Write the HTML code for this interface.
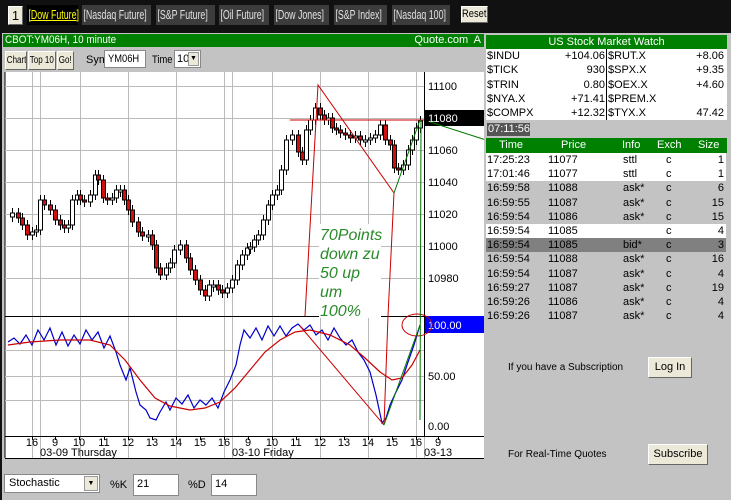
<!DOCTYPE html>
<html><head><meta charset="utf-8"><style>
*{margin:0;padding:0;box-sizing:border-box}
body{width:731px;height:500px;background:#111;font-family:"Liberation Sans",sans-serif;font-size:11px;position:relative;overflow:hidden}
.a{position:absolute}
.tab{position:absolute;top:5px;height:20px;background:#3c3c3c;color:#e0e0e0;font-size:13px;line-height:20px;white-space:nowrap}
.tab span{display:inline-block;transform:scaleX(.68);transform-origin:0 0;padding-left:2px}
.sx{display:inline-block;transform:scaleX(.78);transform-origin:0 0;padding-left:2px}
.btn{position:absolute;background:#ece9d8;border:1px solid #fff;border-right-color:#666;border-bottom-color:#666;color:#000;text-align:center;font-size:11px;white-space:nowrap;overflow:hidden}
.row{position:absolute;left:486px;width:240px;height:15px;font-size:11px;line-height:15px}
.row span{position:absolute}
</style></head><body>
<div class="btn" style="left:8px;top:6px;width:15px;height:19px;font-size:13px;line-height:17px">1</div>
<div class="tab" style="left:27px;width:51px;background:#000;color:#ff0"><span style="text-decoration:underline">[Dow Future]</span></div>
<div class="tab" style="left:82px;width:69px"><span>[Nasdaq Future]</span></div>
<div class="tab" style="left:156px;width:59px"><span>[S&amp;P Future]</span></div>
<div class="tab" style="left:219px;width:50px"><span>[Oil Future]</span></div>
<div class="tab" style="left:274px;width:55px"><span>[Dow Jones]</span></div>
<div class="tab" style="left:334px;width:53px"><span>[S&amp;P Index]</span></div>
<div class="tab" style="left:392px;width:58px"><span>[Nasdaq 100]</span></div>
<div class="btn" style="left:461px;top:6px;width:27px;height:17px;line-height:15px"><span class="sx" style="padding-left:0;transform:scaleX(.85)">Reset</span></div>

<div class="a" style="left:2px;top:33px;width:482px;height:467px;background:#c3c3c3"></div>
<div class="a" style="left:3px;top:34px;width:481px;height:13px;background:#008000;color:#fff;font-size:11px;line-height:13px;padding-left:2px"><span class="sx" style="padding-left:0;transform:scaleX(.9)">CBOT:YM06H, 10 minute</span><span style="position:absolute;right:3px">Quote.com&nbsp; A</span></div>
<div class="btn" style="left:5px;top:51px;width:22px;height:19px;line-height:17px;font-size:10px;text-align:left"><span class="sx" style="padding-left:1px;transform:scaleX(.8)">Chart</span></div>
<div class="btn" style="left:28px;top:51px;width:28px;height:19px;line-height:17px;font-size:10px;text-align:left"><span class="sx" style="padding-left:1px;transform:scaleX(.8)">Top 10</span></div>
<div class="btn" style="left:57px;top:51px;width:17px;height:19px;line-height:17px;font-size:10px;text-align:left"><span class="sx" style="padding-left:1px;transform:scaleX(.8)">Go!</span></div>
<div class="a" style="left:86px;top:54px;font-size:11px">Sym</div>
<div class="a" style="left:104px;top:50px;width:42px;height:18px;background:#fff;border:1px solid #888;padding:2px 3px;font-size:11px"><span class="sx" style="padding:0;transform:scaleX(.85)">YM06H</span></div>
<div class="a" style="left:152px;top:54px;font-size:11px"><span class="sx" style="padding:0;transform:scaleX(.85)">Time</span></div>
<div class="a" style="left:174px;top:50px;width:27px;height:18px;background:#fff;border:1px solid #888;padding:2px 2px;font-size:11px">10<span style="position:absolute;right:1px;top:1px;width:11px;height:14px;background:#ece9d8;border:1px solid #999;font-size:7px;text-align:center;line-height:12px">▼</span></div>

<svg class="a" style="left:0;top:70px" width="731" height="400" viewBox="0 70 731 400">
<rect x="5" y="72" width="479" height="386" fill="#fff"/>
<line x1="5" y1="72" x2="5" y2="458" stroke="#000"/>
<g id="grid" stroke="#bbb" stroke-width="1"></g>
<line x1="424.5" y1="72" x2="424.5" y2="436" stroke="#000"/>
<line x1="5" y1="316.5" x2="484" y2="316.5" stroke="#000"/>
<line x1="5" y1="436.5" x2="484" y2="436.5" stroke="#000"/>
<line x1="5" y1="458.5" x2="484" y2="458.5" stroke="#000"/>
<g id="candles"></g>
<g id="axis" font-size="11" font-family="Liberation Sans" fill="#000"></g>
<rect x="425" y="110" width="59" height="16" fill="#000"/>
<text x="428" y="122" fill="#fff" font-size="11" font-family="Liberation Sans">11080</text>
<rect x="425" y="316" width="59" height="17" fill="#0000ff"/>
<text x="428" y="329" fill="#fff" font-size="11" font-family="Liberation Sans">100.00</text>
<text x="428" y="380" font-size="11" font-family="Liberation Sans">50.00</text>
<text x="428" y="430" font-size="11" font-family="Liberation Sans">0.00</text>
<polyline id="kl" fill="none" stroke="#00c" stroke-width="1.2"/>
<polyline id="dl" fill="none" stroke="#c00" stroke-width="1.2"/>
<g fill="none" stroke="#c00" stroke-width="1">
<line x1="290" y1="120" x2="424" y2="120"/>
<polyline points="305,316 318,85 394,193 388,316"/>
<line x1="300" y1="326" x2="384" y2="425"/>
<line x1="388" y1="316" x2="384" y2="425"/>
<ellipse cx="417" cy="325" rx="15" ry="11"/>
<ellipse cx="570" cy="196" rx="24" ry="13"/>
</g>
<g fill="none" stroke="#070" stroke-width="1">
<line x1="394" y1="193" x2="420" y2="120"/>
<line x1="421" y1="120" x2="420" y2="420"/>
<line x1="384" y1="425" x2="420" y2="325"/>
<line x1="430" y1="122" x2="486" y2="140"/>
<line x1="520" y1="152" x2="560" y2="160"/>
<ellipse cx="577" cy="166" rx="32" ry="17"/>
</g>
<rect x="319" y="224" width="62" height="94" fill="#fff"/>
<g font-size="16" font-style="italic" fill="#2a8a2a" font-family="Liberation Sans">
<text x="320" y="240">70Points</text><text x="320" y="259">down zu</text><text x="320" y="278">50 up</text><text x="320" y="297">um</text><text x="320" y="316">100%</text></g>
</svg>

<div class="a" style="left:4px;top:474px;width:96px;height:19px;background:#fff;border:1px solid #888;font-size:11px;padding:2px 4px">Stochastic<span style="position:absolute;right:1px;top:1px;width:14px;height:15px;background:#ece9d8;border:1px solid #999;font-size:7px;text-align:center;line-height:13px">▼</span></div>
<div class="a" style="left:110px;top:479px">%K</div>
<div class="a" style="left:133px;top:474px;width:46px;height:22px;background:#fff;border:1px solid #888;padding:3px 3px">21</div>
<div class="a" style="left:188px;top:479px">%D</div>
<div class="a" style="left:211px;top:474px;width:46px;height:22px;background:#fff;border:1px solid #888;padding:3px 3px">14</div>

<div class="a" style="left:484px;top:33px;width:247px;height:467px;background:#c3c3c3"></div>
<div class="a" style="left:486px;top:35px;width:241px;height:14px;background:#008000;color:#fff;text-align:center;font-size:11px;line-height:14px">US Stock Market Watch</div>
<div class="a" style="left:486px;top:49px;width:241px;height:71px;background:#fff"></div>
<div class="a" style="left:606px;top:49px;width:1px;height:71px;background:#000"></div>
<div id="mw"></div>
<div class="a" style="left:487px;top:123px;width:43px;height:13px;background:#555;color:#fff;font-size:11px;line-height:13px;padding-left:1px">07:11:56</div>
<div class="a" style="left:486px;top:138px;width:241px;height:15px;background:#008000;color:#fff;font-size:11px;line-height:15px">
<span style="position:absolute;left:13px">Time</span><span style="position:absolute;left:75px">Price</span><span style="position:absolute;left:136px">Info</span><span style="position:absolute;left:171px">Exch</span><span style="position:absolute;left:212px">Size</span></div>
<div id="tr"></div>
<div class="a" style="left:508px;top:362px;font-size:10px">If you have a Subscription</div>
<div class="btn" style="left:648px;top:357px;width:44px;height:21px;line-height:19px;font-size:11px">Log In</div>
<div class="a" style="left:508px;top:449px;font-size:10px">For Real-Time Quotes</div>
<div class="btn" style="left:648px;top:444px;width:60px;height:21px;line-height:19px;font-size:11px">Subscribe</div>

<script>
var ns="http://www.w3.org/2000/svg";
function el(p,t,a){var e=document.createElementNS(ns,t);for(var k in a)e.setAttribute(k,a[k]);p.appendChild(e);return e}
var g=document.getElementById('grid');
[32,40,80,128,176,224,232,272,320,368,416,424].forEach(function(x){el(g,'line',{x1:x+.5,y1:72,x2:x+.5,y2:458})});
for(var y=86;y<=300;y+=32)el(g,'line',{x1:5,y1:y+.5,x2:424,y2:y+.5});
[350,376,400].forEach(function(y){el(g,'line',{x1:5,y1:y+.5,x2:424,y2:y+.5})});
var ax=document.getElementById('axis');
var pr=[11100,11080,11060,11040,11020,11000,10980];
pr.forEach(function(p,i){if(p!=11080){var t=el(ax,'text',{x:428,y:90+i*32});t.textContent=p}});
var lab=[[32,'16'],[55,'9'],[79,'10'],[104,'11'],[128,'12'],[152,'13'],[176,'14'],[200,'15'],[224,'16'],[248,'9'],[272,'10'],[296,'11'],[320,'12'],[344,'13'],[368,'14'],[392,'15'],[416,'16'],[438,'9']];
lab.forEach(function(l){var t=el(ax,'text',{x:l[0],y:446,'text-anchor':'middle'});t.textContent=l[1];el(ax,'line',{x1:l[0]+.5,y1:436,x2:l[0]+.5,y2:440,stroke:'#000'})});
[[40,'03-09 Thursday'],[232,'03-10 Friday'],[424,'03-13']].forEach(function(l){var t=el(ax,'text',{x:l[0],y:456});t.textContent=l[1]});
var pts=[[12,213],[18,218],[22,225],[27,235],[32,232],[36,230],[40,200],[44,205],[50,210],[55,220],[60,225],[64,228],[68,225],[72,200],[77,195],[80,200],[84,202],[90,195],[95,175],[98,180],[103,198],[107,200],[112,198],[116,190],[120,190],[124,200],[128,210],[132,222],[138,232],[142,236],[148,235],[152,245],[156,268],[160,275],[166,268],[170,263],[174,250],[180,245],[186,258],[190,270],[195,280],[200,290],[205,296],[209,285],[213,285],[218,290],[222,293],[227,288],[232,280],[237,265],[242,255],[247,248],[250,247],[254,240],[258,235],[263,220],[268,205],[272,195],[277,190],[281,170],[286,140],[292,135],[298,152],[302,160],[306,130],[310,120],[315,108],[320,115],[324,120],[328,118],[332,128],[336,130],[340,133],[345,135],[350,138],[355,136],[360,140],[365,140],[370,138],[375,135],[380,125],[385,140],[390,145],[394,168],[398,170],[403,165],[408,150],[412,140],[416,128],[420,121]];
var cg=document.getElementById('candles');var prev=pts[0][1]+4;
pts.forEach(function(p){var o=prev,c=p[1];var top=Math.min(o,c),bot=Math.max(o,c);if(bot-top<2)bot=top+2;
el(cg,'line',{x1:p[0]+.5,y1:top-5,x2:p[0]+.5,y2:bot+5,stroke:'#000'});
el(cg,'rect',{x:p[0]-1.5,y:top,width:4,height:bot-top,fill:c>o?'#d01010':'#fff',stroke:'#000','stroke-width':1});prev=c});
document.getElementById('kl').setAttribute('points','8,342 14,338 20,344 26,335 32,345 38,330 44,340 50,328 56,345 62,332 68,346 74,335 80,344 86,330 92,340 98,332 104,348 110,336 116,352 120,365 126,380 130,368 136,392 140,405 146,410 150,418 156,420 160,412 166,402 170,410 176,398 182,404 188,395 194,408 200,400 206,405 212,398 218,408 224,392 230,380 236,365 240,345 244,330 250,338 256,328 262,340 268,326 274,336 280,326 286,336 292,328 298,324 304,330 310,325 316,335 322,330 328,340 334,328 340,338 346,345 352,340 358,352 364,360 370,372 376,395 382,423 386,418 390,405 396,392 402,380 408,362 414,345 420,325');
document.getElementById('dl').setAttribute('points','8,345 30,342 60,340 90,340 110,345 125,360 140,380 155,398 170,406 190,410 205,408 220,402 235,388 250,370 265,352 280,340 295,332 310,330 330,335 350,345 365,358 380,372 392,380 402,378 412,365 420,350');
var mw=document.getElementById('mw');
[['$INDU','+104.06','$RUT.X','+8.06'],['$TICK','930','$SPX.X','+9.35'],['$TRIN','0.80','$OEX.X','+4.60'],['$NYA.X','+71.41','$PREM.X',''],['$COMPX','+12.32','$TYX.X','47.42']].forEach(function(r,i){
mw.innerHTML+='<div class="row" style="top:'+(49+i*14.3)+'px;height:14px;line-height:14px"><span style="left:1px">'+r[0]+'</span><span style="right:121px">'+r[1]+'</span><span style="left:122px">'+r[2]+'</span><span style="right:2px">'+r[3]+'</span></div>'});
var tr=document.getElementById('tr');
[['17:25:23','11077','sttl','1','#fff'],['17:01:46','11077','sttl','1','#fff'],['16:59:58','11088','ask*','6','#c3c3c3'],['16:59:55','11087','ask*','15','#c3c3c3'],['16:59:54','11086','ask*','15','#c3c3c3'],['16:59:54','11085','','4','#fff'],['16:59:54','11085','bid*','3','#808080'],['16:59:54','11088','ask*','16','#c3c3c3'],['16:59:54','11087','ask*','4','#c3c3c3'],['16:59:27','11087','ask*','19','#c3c3c3'],['16:59:26','11086','ask*','4','#c3c3c3'],['16:59:26','11087','ask*','4','#c3c3c3']].forEach(function(r,i){
tr.innerHTML+='<div class="row" style="top:'+(153+i*14.2)+'px;height:14px;line-height:14px;background:'+r[4]+'"><span style="left:1px">'+r[0]+'</span><span style="left:62px">'+r[1]+'</span><span style="left:137px">'+r[2]+'</span><span style="left:180px">c</span><span style="right:2px">'+r[3]+'</span></div>'});
</script>
</body></html>
